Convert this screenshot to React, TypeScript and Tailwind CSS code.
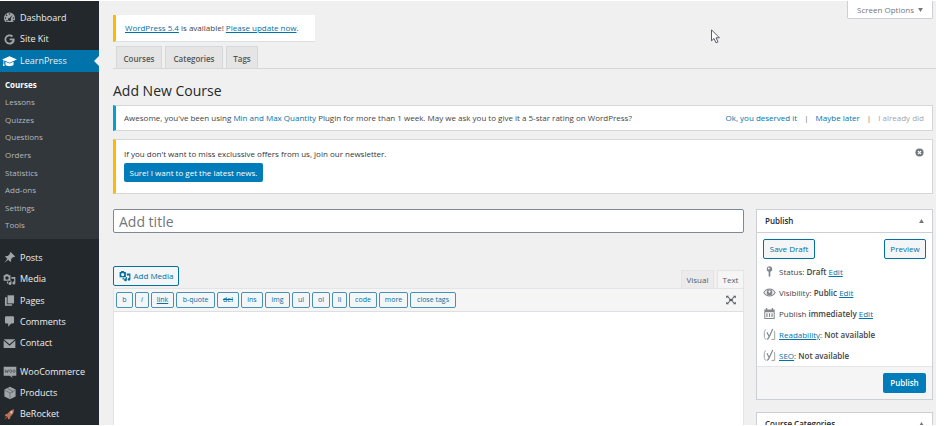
import type { ReactNode } from "react";

type IconProps = { className?: string };

function Svg({ className = "size-[13px]", children }: IconProps & { children: ReactNode }) {
  return (
    <svg viewBox="0 0 20 20" className={`shrink-0 ${className}`} fill="currentColor" aria-hidden="true">
      {children}
    </svg>
  );
}

const DashboardIcon = () => (
  <Svg>
    <path
      fillRule="evenodd"
      d="M3.8 17h12.4A8.6 8.6 0 1 0 3.8 17zM10 3.3a1.2 1.2 0 1 1 0 2.4 1.2 1.2 0 0 1 0-2.4zM5.6 5.2a1.2 1.2 0 1 1 0 2.4 1.2 1.2 0 0 1 0-2.4zM3.8 9.6a1.2 1.2 0 1 1 0 2.4 1.2 1.2 0 0 1 0-2.4zm12.4 0a1.2 1.2 0 1 1 0 2.4 1.2 1.2 0 0 1 0-2.4zM14.8 5.6l-3 6.2a2.2 2.2 0 1 1-1.6-.9zM5 14.2a1.2 1.2 0 1 1 0 1.6zm10 0a1.2 1.2 0 1 1 0 1.6z"
    />
  </Svg>
);
const GoogleIcon = () => (
  <Svg>
    <path d="M10.2 8.6h7.5c.9 5.2-2.4 9.2-7.5 9.2A7.8 7.8 0 1 1 15.6 4.400l-2.2 2.100A4.900 4.900 0 1 0 14.600 11.300h-4.400z" />
  </Svg>
);
const CapIcon = () => (
  <Svg className="size-[15px]">
    <path d="M10 3 0 7.200l2 .9v4.400l-1 3.500h2.600l-.7-3.500V8.500L10 11.500 20 7.200z" />
    <path d="M4.600 10.400v4c1.600 2.600 9.200 2.600 10.800 0v-4L10 12.800z" />
  </Svg>
);
const PinIcon = () => (
  <Svg>
    <path d="m10.400 3 1.300-1.600 7 7L17 9.700l-1.500-.3-3.200 3.300c.5 1.700.3 3.300-.8 4.300L8 13.500 2 18.300l4.600-6.200L3 8.500c1.200-1 2.700-1.200 4.300-.7l3.300-3.200z" />
  </Svg>
);
const MediaIcon = ({ className }: IconProps) => (
  <Svg className={className}>
    <path
      fillRule="evenodd"
      d="M1 3.500h2l1-1.700h4l1 1.700h2.500V12H1zM6.100 5a2.700 2.700 0 1 0 0 5.400A2.700 2.700 0 0 0 6.100 5z"
    />
    <path d="M13 6h6v9.500a2.300 2.300 0 1 1-1.900-2.200V9H13zM11.500 13.500V12l1.600-.2v4.700a2.300 2.300 0 1 1-1.600-2.400zM6 13h2v3H6z" />
  </Svg>
);
const PagesIcon = () => (
  <Svg>
    <path d="M7 2h10v12.500H7z" />
    <path d="M3 5h2.800v10.700H14V18H3z" />
  </Svg>
);
const CommentIcon = () => (
  <Svg>
    <path d="M5 2h10a2 2 0 0 1 2 2v7a2 2 0 0 1-2 2h-2.500L8 18v-5H5a2 2 0 0 1-2-2V4a2 2 0 0 1 2-2z" />
  </Svg>
);
const MailIcon = () => (
  <Svg>
    <path d="M1.200 3.500h17.600L10 11.300z" />
    <path d="M1 5.400 10 13.400l9-8V17H1z" />
  </Svg>
);
const WooIcon = () => (
  <Svg className="size-[14px]">
    <path d="M1 2.500h18v13h-6.500l1.200 3-4-3H1z" />
    <path
      d="m3 6.500.8 4.500 2-3.500.7 3.500 1.500-4.500M11 6.800c-2.200 0-2.200 4 0 4s2.200-4 0-4zm4.800 0c-2.200 0-2.200 4 0 4s2.200-4 0-4z"
      fill="none"
      stroke="#4b5054"
      strokeWidth="1.100"
    />
  </Svg>
);
const BoxIcon = () => (
  <Svg className="size-[14px]">
    <path d="m10 1 8 4v10l-8 4-8-4V5z" />
    <path d="M3 6.200 10 10l7-3.800M10 10v8M6.500 3.500l7 3.800V10" fill="none" stroke="#5c6166" strokeWidth="1" />
  </Svg>
);
const RocketIcon = () => (
  <Svg>
    <path d="M17 2c-4.500.5-7.500 3-9.500 6.500L4 9.500l-1.500 3 3 .2 2 2 .3 3 3-1.700 1-3.500C15 10.500 17 7 17 2z" fill="#b9745c" />
    <path d="m5 13.500-3 4.500 4.500-3z" fill="#d8492f" />
    <path d="M13 5a1.600 1.600 0 1 1-.1 0z" fill="#e8d5cc" />
  </Svg>
);
const StatusIcon = () => (
  <Svg>
    <path
      fillRule="evenodd"
      d="M10 2a4.300 4.300 0 0 1 1.300 8.400V17L10 18.500 8.700 17v-6.600A4.300 4.300 0 0 1 10 2zm-1 2a1.400 1.400 0 1 0 0 2.800A1.400 1.400 0 0 0 9 4z"
    />
  </Svg>
);
const EyeIcon = () => (
  <Svg>
    <path
      fillRule="evenodd"
      d="M10 3.800c4 0 7.600 2.500 9.700 6.200-2.100 3.700-5.700 6.200-9.700 6.200S2.400 13.700.3 10C2.400 6.300 6 3.800 10 3.800zM10 5.400C7 5.400 4 7 2.200 10c1.800 3 4.800 4.600 7.800 4.600s6-1.600 7.800-4.600C16 7 13 5.400 10 5.400z"
    />
    <path fillRule="evenodd" d="M10 5.500a4.500 4.500 0 1 1 0 9 4.500 4.500 0 0 1 0-9zm0 1.300a1.700 1.700 0 1 0 1.700 1.700A1.700 1.700 0 0 0 10 6.800z" />
  </Svg>
);
const CalendarIcon = () => (
  <Svg>
    <path
      fillRule="evenodd"
      d="M2 4h2.500V1.500h2V4h7V1.500h2V4H18v14.500H2zm1.500 4v9h13V8z"
    />
    <path d="M5.200 9.500h1.800v6H5.200zm3.900 0h1.800v6H9.100zm3.900 0h1.800v6H13z" />
  </Svg>
);
const YoastIcon = () => (
  <Svg>
    <g fill="none" stroke="currentColor">
      <path d="M4.500 2.500C2.500 3.500 2 5 2 7v6c0 2 .5 3.500 2.500 4.500M17 4.500c.8 1 1 2 1 3.500v9.500h-5" strokeWidth="1.200" />
      <path d="m6 6.500 3.600 7M15 1.500 9.600 13.500c-.9 2.500-1.800 3.800-3.800 4" strokeWidth="1.800" />
    </g>
  </Svg>
);
const ExpandIcon = () => (
  <Svg className="size-[12px]">
    <path d="M7 8h6v4H7z" />
    <path d="M2 3h4.500L5.300 4.200l3 3-1.100 1.100-3-3L2 7zM18 3h-4.500l1.200 1.200-3 3 1.100 1.100 3-3L18 7zM2 17h4.500l-1.200-1.200 3-3-1.100-1.100-3 3L2 13zM18 17h-4.500l1.200-1.200-3-3 1.100-1.100 3 3L18 13z" />
  </Svg>
);

const submenu = ["Courses", "Lessons", "Quizzes", "Questions", "Orders", "Statistics", "Add-ons", "Settings", "Tools"];

function MenuItem({ icon, label, active = false }: { icon: ReactNode; label: string; active?: boolean }) {
  return (
    <li className="flex flex-1">
      <a
        href="#"
        aria-current={active ? "true" : undefined}
        className={`relative flex w-full items-center gap-px text-[#eee] ${active ? "bg-[#0073aa]" : ""}`}
      >
        <span className={`flex w-[19px] justify-center ${active ? "text-white" : "text-[#a0a5aa]"}`}>{icon}</span>
        <span>{label}</span>
        {active && (
          <span className="absolute right-0 size-0 border-y-[5px] border-r-[5px] border-y-transparent border-r-[#f0f0f0]" />
        )}
      </a>
    </li>
  );
}

function Sidebar() {
  return (
    <nav aria-label="Main menu" className="w-[99px] shrink-0 overflow-hidden bg-[#23282d] pt-[6px] text-[9px] leading-[12px]">
      <ul className="flex h-[43px] flex-col">
        <MenuItem icon={<DashboardIcon />} label="Dashboard" />
        <MenuItem icon={<GoogleIcon />} label="Site Kit" />
      </ul>
      <ul className="flex h-[22px] flex-col">
        <MenuItem icon={<CapIcon />} label="LearnPress" active />
      </ul>
      <ul className="flex h-[167px] flex-col bg-[#32373c] pt-[4px] pb-[5px] text-[8px]">
        {submenu.map((s, i) => (
          <li key={s} className="flex flex-1 items-center pl-[5px]">
            <a href="#" className={i === 0 ? "font-bold text-white" : "text-[#b4b9be]"}>
              {s}
            </a>
          </li>
        ))}
      </ul>
      <ul className="mt-[8px] flex h-[107px] flex-col">
        <MenuItem icon={<PinIcon />} label="Posts" />
        <MenuItem icon={<MediaIcon />} label="Media" />
        <MenuItem icon={<PagesIcon />} label="Pages" />
        <MenuItem icon={<CommentIcon />} label="Comments" />
        <MenuItem icon={<MailIcon />} label="Contact" />
      </ul>
      <ul className="mt-[7px] flex h-[64px] flex-col">
        <MenuItem icon={<WooIcon />} label="WooCommerce" />
        <MenuItem icon={<BoxIcon />} label="Products" />
        <MenuItem icon={<RocketIcon />} label="BeRocket" />
      </ul>
    </nav>
  );
}

function Link({ children }: { children: ReactNode }) {
  return (
    <a href="#" className="text-[#0073aa] underline">
      {children}
    </a>
  );
}

const quickTags: [string, string][] = [
  ["b", "w-[17px]"],
  ["i", "w-[14px] italic"],
  ["link", "w-[23px] underline"],
  ["b-quote", "w-[39px]"],
  ["del", "w-[22px] line-through"],
  ["ins", "w-[22px]"],
  ["img", "w-[25px]"],
  ["ul", "w-[18px]"],
  ["ol", "w-[18px]"],
  ["li", "w-[15px]"],
  ["code", "w-[28px]"],
  ["more", "w-[29px]"],
  ["close tags", "w-[46px]"],
];

function Editor() {
  return (
    <section className="flex min-w-0 flex-1 flex-col">
      <input
        type="text"
        aria-label="Add title"
        placeholder="Add title"
        className="h-[24px] w-full shrink-0 rounded-[2px] border border-[#7e8993] bg-white px-[5px] text-[14px] leading-[20px] outline-none placeholder:text-[#72777c]"
      />
      <div className="mt-[33px] flex shrink-0 items-end justify-between">
        <button
          type="button"
          className="mb-[2px] flex h-[20px] w-[66px] items-center justify-center gap-[3px] rounded-[2px] border border-[#0071a1] bg-[#f3f5f6] whitespace-nowrap text-[#0071a1]"
        >
          <MediaIcon className="size-[12px]" />
          Add Media
        </button>
        <div className="flex gap-[3px] text-[#555d66]">
          <button type="button" className="h-[18px] w-[33px] border border-b-0 border-[#e2e4e7] bg-[#ebebeb]">
            Visual
          </button>
          <button type="button" className="h-[18px] w-[27px] border border-b-0 border-[#e2e4e7] bg-[#f5f5f5]">
            Text
          </button>
        </div>
      </div>
      <div className="flex min-h-[138px] flex-1 flex-col border border-b-0 border-[#e2e4e7] bg-white">
        <div className="flex h-[23px] items-center justify-between border-b border-[#dddfe2] bg-[#f5f5f5] pr-[6px] pl-[2px]">
          <div className="flex gap-[2px]">
            {quickTags.map(([tag, look]) => (
              <button
                key={tag}
                type="button"
                className={`h-[16px] rounded-[2px] border border-[#4692b5] bg-[#f3f5f6] text-[7px] leading-[12px] whitespace-nowrap text-[#0071a1] ${look}`}
              >
                {tag}
              </button>
            ))}
          </div>
          <button type="button" aria-label="Distraction-free writing mode" className="text-[#555d66]">
            <ExpandIcon />
          </button>
        </div>
        <textarea aria-label="Content" className="w-full flex-1 resize-none bg-white outline-none" />
      </div>
    </section>
  );
}

function PanelHeader({ title }: { title: string }) {
  return (
    <div className="flex h-[23px] items-center justify-between border-b border-[#ccd0d4] px-[8px]">
      <h2 className="font-semibold text-[#23282d]">{title}</h2>
      <button type="button" aria-label={`Toggle panel: ${title}`}>
        <svg viewBox="0 0 6 5" className="h-[4px] w-[5px]" fill="#72777c">
          <path d="M3 0l3 5H0z" />
        </svg>
      </button>
    </div>
  );
}

function PublishRow({ icon, children }: { icon: ReactNode; children: ReactNode }) {
  return (
    <li className="flex flex-1 items-center gap-[3px]">
      <span className="text-[#82878c]">{icon}</span>
      <span>{children}</span>
    </li>
  );
}

const outlineButton = "h-[20px] rounded-[2px] border border-[#0071a1] bg-[#f3f5f6] text-[#0071a1]";

function SidePanels() {
  return (
    <aside className="w-[177px] shrink-0">
      <section className="border border-[#ccd0d4] bg-white">
        <PanelHeader title="Publish" />
        <div className="px-[6px] pt-[6px]">
          <div className="flex justify-between">
            <button type="button" className={`${outlineButton} w-[52px]`}>
              Save Draft
            </button>
            <button type="button" className={`${outlineButton} w-[42px]`}>
              Preview
            </button>
          </div>
          <ul className="mt-[2px] flex h-[105px] flex-col">
            <PublishRow icon={<StatusIcon />}>
              Status: <b className="font-semibold">Draft</b> <Link>Edit</Link>
            </PublishRow>
            <PublishRow icon={<EyeIcon />}>
              Visibility: <b className="font-semibold">Public</b> <Link>Edit</Link>
            </PublishRow>
            <PublishRow icon={<CalendarIcon />}>
              Publish <b className="font-semibold">immediately</b> <Link>Edit</Link>
            </PublishRow>
            <PublishRow icon={<YoastIcon />}>
              <Link>Readability</Link>: <b className="font-semibold">Not available</b>
            </PublishRow>
            <PublishRow icon={<YoastIcon />}>
              <Link>SEO</Link>: <b className="font-semibold">Not available</b>
            </PublishRow>
          </ul>
        </div>
        <div className="flex h-[33px] items-center justify-end border-t border-[#e2e4e7] bg-[#f5f5f5] pr-[6px]">
          <button type="button" className="h-[20px] w-[43px] rounded-[2px] bg-[#007cba] font-semibold text-white">
            Publish
          </button>
        </div>
      </section>
      <section className="mt-[12px] border border-[#ccd0d4] bg-white">
        <PanelHeader title="Course Categories" />
      </section>
    </aside>
  );
}

const tabs: [string, string][] = [
  ["Courses", "w-[46px]"],
  ["Categories", "w-[58px]"],
  ["Tags", "w-[32px]"],
];

export default function App() {
  return (
    <div className="flex h-screen overflow-hidden bg-white py-px pr-[8px] font-['Open_Sans','Noto_Sans',sans-serif] text-[8px] leading-[12px] text-[#444]">
      <Sidebar />
      <main className="relative flex min-w-0 flex-1 flex-col overflow-hidden bg-[#f0f0f0]">
        <button
          type="button"
          className="absolute top-0 right-[3px] flex h-[18px] w-[86px] items-center justify-center gap-[4px] rounded-b-[2px] border border-t-0 border-[#ccd0d4] bg-white text-[#72777c]"
        >
          Screen Options
          <svg viewBox="0 0 6 5" className="h-[4px] w-[5px]" fill="#72777c" aria-hidden="true">
            <path d="M0 0h6L3 5z" />
          </svg>
        </button>
        <svg viewBox="0 0 10 15" className="absolute top-[28px] left-[612px] h-[15px] w-[10px]" aria-hidden="true">
          <path d="M.5.800v11l2.500-2.300 2 4.300 2-.9-2-4.100h3.400z" fill="#fff" stroke="#444b55" strokeWidth=".9" />
        </svg>

        <div className="pt-[14px] pl-[14px]">
          <p className="flex h-[27px] w-[202px] items-center border-b border-l-[3px] border-b-[#dcdee0] border-l-[#ffb900] bg-white pl-[9px] whitespace-pre">
            <Link>WordPress 5.4</Link> is available! <Link>Please update now</Link>.
          </p>
        </div>
        <nav aria-label="Course sections" className="mt-[4px] ml-[14px] flex gap-[3px] border-b border-[#d5d7d9] pl-[3px]">
          {tabs.map(([tab, width]) => (
            <a
              key={tab}
              href="#"
              className={`flex h-[22px] items-center justify-center border border-b-0 border-[#d5d9dc] bg-[#e5e5e5] pt-[2px] font-semibold text-[#555] ${width}`}
            >
              {tab}
            </a>
          ))}
        </nav>

        <div className="flex min-h-0 flex-1 flex-col pr-[3px] pl-[14px]">
          <h1 className="mt-[12px] text-[14px] leading-[20px] text-[#23282d]">Add New Course</h1>
          <div className="mt-[4px] flex h-[26px] shrink-0 items-center justify-between border border-l-[3px] border-[#d5d8db] border-l-[#00a0d2] bg-white pr-[8px] pl-[8px]">
            <p>
              Awesome, you've been using{" "}
              <a href="#" className="text-[#0073aa]">
                Min and Max Quantity
              </a>{" "}
              Plugin for more than 1 week. May we ask you to give it a 5-star rating on WordPress?
            </p>
            <p className="flex gap-[7px] text-[#0073aa]">
              <a href="#">Ok, you deserved it</a>
              <span className="text-[#777]">|</span>
              <a href="#">Maybe later</a>
              <span className="text-[#777]">|</span>
              <a href="#" className="text-[#a0a5aa]">
                I already did
              </a>
            </p>
          </div>
          <div className="mt-[8px] flex h-[55px] shrink-0 items-start justify-between border border-l-[3px] border-[#d5d8db] border-l-[#ffb900] bg-white pt-[8px] pr-[8px] pl-[8px]">
            <div>
              <p className="text-[#32373c]">If you don't want to miss exclussive offers from us, join our newsletter.</p>
              <button type="button" className="mt-[3px] h-[19px] w-[139px] rounded-[2px] bg-[#007cba] text-white">
                Sure! I want to get the latest news.
              </button>
            </div>
            <button type="button" aria-label="Dismiss">
              <svg viewBox="0 0 10 10" className="size-[9px]" aria-hidden="true">
                <circle cx="5" cy="5" r="4.500" fill="#72777c" />
                <path d="m3.200 3.200 3.600 3.600m0-3.600L3.200 6.800" stroke="#fff" strokeWidth="1.200" />
              </svg>
            </button>
          </div>
          <div className="mt-[15px] flex min-h-0 flex-1 gap-[12px]">
            <Editor />
            <SidePanels />
          </div>
        </div>
      </main>
    </div>
  );
}
